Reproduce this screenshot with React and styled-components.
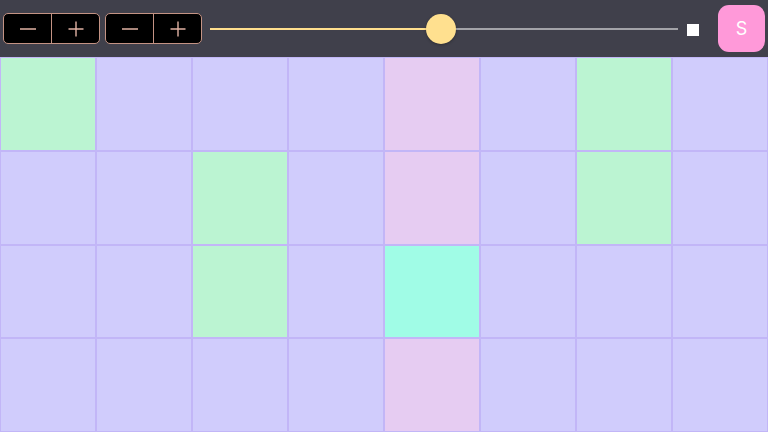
import React from 'react';
import styled, { createGlobalStyle } from 'styled-components';

const GlobalStyle = createGlobalStyle`
  html, body, #root {
    margin: 0;
    padding: 0;
    height: 100%;
  }
  body {
    font-family: Inter, "Noto Sans", sans-serif;
    overflow: hidden;
  }
`;

const Page = styled.div`
  display: flex;
  flex-direction: column;
  width: 768px;
  height: 432px;
`;

const Toolbar = styled.div`
  height: 57px;
  flex: none;
  background: #40404b;
  display: flex;
  align-items: center;
  padding: 0 3px 0 3px;
  box-sizing: border-box;
`;

const StepGroup = styled.div`
  display: flex;
  width: 97px;
  height: 31px;
  box-sizing: border-box;
  border: 1px solid #c49384;
  border-radius: 5px;
  background: #000;
  overflow: hidden;
  margin-right: 5px;
`;

const StepButton = styled.button`
  flex: 1;
  border: none;
  background: transparent;
  padding: 0;
  display: flex;
  align-items: center;
  justify-content: center;
  & + & {
    border-left: 1px solid #c49384;
  }
`;

const SliderWrap = styled.div`
  flex: 1;
  position: relative;
  height: 30px;
  margin-left: 3px;
  margin-right: 9px;
  display: flex;
  align-items: center;
`;

const Track = styled.div`
  flex: 1;
  height: 2px;
  background: #a3a3a8;
  position: relative;
`;

const Fill = styled.div`
  position: absolute;
  left: 0;
  top: 0;
  height: 2px;
  background: #ffdf8e;
`;

const Thumb = styled.div`
  position: absolute;
  top: 50%;
  width: 30px;
  height: 30px;
  margin-left: -15px;
  margin-top: -15px;
  border-radius: 50%;
  background: #ffe08f;
  box-shadow: 0 1px 3px rgba(0, 0, 0, 0.3);
`;

const StopSquare = styled.div`
  width: 12px;
  height: 12px;
  background: #fff;
  margin-right: 19px;
  margin-top: 2px;
`;

const SoloButton = styled.button`
  width: 47px;
  height: 47px;
  border: none;
  border-radius: 11px;
  background: #ff99d9;
  color: #fff;
  font-family: Inter, "Noto Sans", sans-serif;
  font-size: 18px;
  padding: 0;
`;

const Grid = styled.div`
  flex: 1;
  display: grid;
  grid-template-columns: repeat(8, 1fr);
  grid-template-rows: repeat(4, 1fr);
`;

const colors = {
  off: '#d0ccfc',
  on: '#bbf4d2',
  col: '#e6ccf2',
  hit: '#a0fce6',
};

const Cell = styled.div`
  background: ${(p) => colors[p.$kind]};
  border: 0.5px solid #c2b6f7;
`;

const pattern = [
  [1, 0, 0, 0, 0, 0, 1, 0],
  [0, 0, 1, 0, 0, 0, 1, 0],
  [0, 0, 1, 0, 0, 0, 0, 0],
  [0, 0, 0, 0, 0, 0, 0, 0],
];

const Minus = () => (
  <svg width="18" height="18" viewBox="0 0 18 18">
    <path d="M1 9h16" stroke="#e2b3a4" strokeWidth="1.4" />
  </svg>
);

const Plus = () => (
  <svg width="18" height="18" viewBox="0 0 18 18">
    <path d="M1.5 9h15M9 1.5v15" stroke="#e2b3a4" strokeWidth="1.4" />
  </svg>
);

const Stepper = () => (
  <StepGroup>
    <StepButton><Minus /></StepButton>
    <StepButton><Plus /></StepButton>
  </StepGroup>
);

export default function App() {
  const value = 0.493;
  const current = 4;
  return (
    <Page>
      <GlobalStyle />
      <Toolbar>
        <Stepper />
        <Stepper />
        <SliderWrap>
          <Track>
            <Fill style={{ width: `${value * 100}%` }} />
            <Thumb style={{ left: `${value * 100}%` }} />
          </Track>
        </SliderWrap>
        <StopSquare />
        <SoloButton>S</SoloButton>
      </Toolbar>
      <Grid>
        {pattern.map((row, r) =>
          row.map((on, c) => {
            let kind = on ? 'on' : 'off';
            if (c === current) kind = on ? 'hit' : 'col';
            if (r === 2 && c === current) kind = 'hit';
            return <Cell key={`${r}-${c}`} $kind={kind} />;
          })
        )}
      </Grid>
    </Page>
  );
}
